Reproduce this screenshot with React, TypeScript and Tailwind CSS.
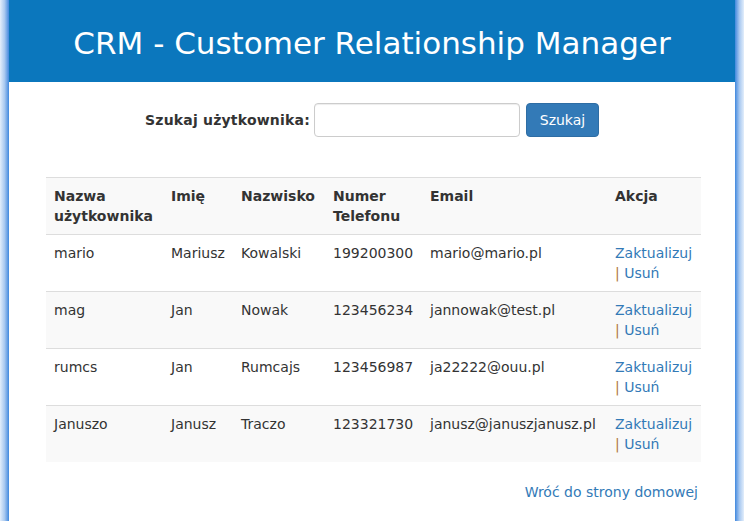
const users = [
  { login: "mario", first: "Mariusz", last: "Kowalski", phone: "199200300", email: "mario@mario.pl" },
  { login: "mag", first: "Jan", last: "Nowak", phone: "123456234", email: "jannowak@test.pl" },
  { login: "rumcs", first: "Jan", last: "Rumcajs", phone: "123456987", email: "ja22222@ouu.pl" },
  { login: "Januszo", first: "Janusz", last: "Traczo", phone: "123321730", email: "janusz@januszjanusz.pl" },
];

const cols = ["w-[117px]", "w-[70px]", "w-[92px]", "w-[97px]", "w-[185px]", "w-[94px]"];

export default function App() {
  return (
    <div className="flex h-[521px] w-[744px] overflow-hidden bg-white font-['DejaVu_Sans',sans-serif] text-[14px] leading-5 text-[#333]">
      {/* window frame, left */}
      <div className="w-[9px] shrink-0 bg-gradient-to-r from-[#e3eefb] via-[#a9c9f0] to-[#3f88dd]" />

      <div className="flex min-w-0 flex-1 flex-col">
        <header className="flex h-[82px] shrink-0 items-center justify-center bg-[#0b77bd]">
          <h1 className="pt-[4px] text-[31px] font-normal leading-none text-white">
            CRM - Customer Relationship Manager
          </h1>
        </header>

        <form className="mt-[21px] flex items-center justify-center" onSubmit={(e) => e.preventDefault()}>
          <label className="mr-[4px] font-bold tracking-[0.2px]">Szukaj użytkownika:</label>
          <input
            type="text"
            className="h-[34px] w-[206px] rounded-[4px] border border-[#ccc] bg-white px-3 shadow-[inset_0_1px_1px_rgba(0,0,0,0.075)]"
          />
          <button
            type="submit"
            className="ml-[6px] h-[34px] w-[73px] rounded-[4px] border border-[#2e6da4] bg-[#337ab7] text-white"
          >
            Szukaj
          </button>
        </form>

        <table className="ml-[37px] mt-[40px] w-[655px] table-fixed border-collapse text-left">
          <tbody>
            <tr className="border-t border-[#ddd] bg-[#f9f9f9] font-bold">
              <td className={`${cols[0]} px-2 py-2 align-top`}>Nazwa użytkownika</td>
              <td className={`${cols[1]} px-2 py-2 align-top`}>Imię</td>
              <td className={`${cols[2]} px-2 py-2 align-top`}>Nazwisko</td>
              <td className={`${cols[3]} px-2 py-2 align-top`}>Numer Telefonu</td>
              <td className={`${cols[4]} px-2 py-2 align-top`}>Email</td>
              <td className={`${cols[5]} px-2 py-2 align-top`}>Akcja</td>
            </tr>
            {users.map((u, i) => (
              <tr key={u.login} className={`border-t border-[#ddd] ${i % 2 === 1 ? "bg-[#f9f9f9]" : "bg-white"}`}>
                <td className="px-2 py-2 align-top">{u.login}</td>
                <td className="px-2 py-2 align-top">{u.first}</td>
                <td className="px-2 py-2 align-top">{u.last}</td>
                <td className="px-2 py-2 align-top">{u.phone}</td>
                <td className="whitespace-nowrap px-2 py-2 align-top">{u.email}</td>
                <td className="px-2 py-2 align-top">
                  <a href="#" className="text-[#337ab7]">Zaktualizuj</a>
                  <br />
                  <span className="text-[#b07a40]">|</span>{" "}
                  <a href="#" className="text-[#337ab7]">Usuń</a>
                </td>
              </tr>
            ))}
          </tbody>
        </table>

        <div className="ml-[37px] mt-[20px] w-[655px] pr-[3px] text-right">
          <a href="#" className="text-[#337ab7]">Wróć do strony domowej</a>
        </div>
      </div>

      {/* window frame, right */}
      <div className="w-[9px] shrink-0 bg-gradient-to-r from-[#3f88dd] via-[#a9c9f0] to-[#e3eefb]" />
    </div>
  );
}
